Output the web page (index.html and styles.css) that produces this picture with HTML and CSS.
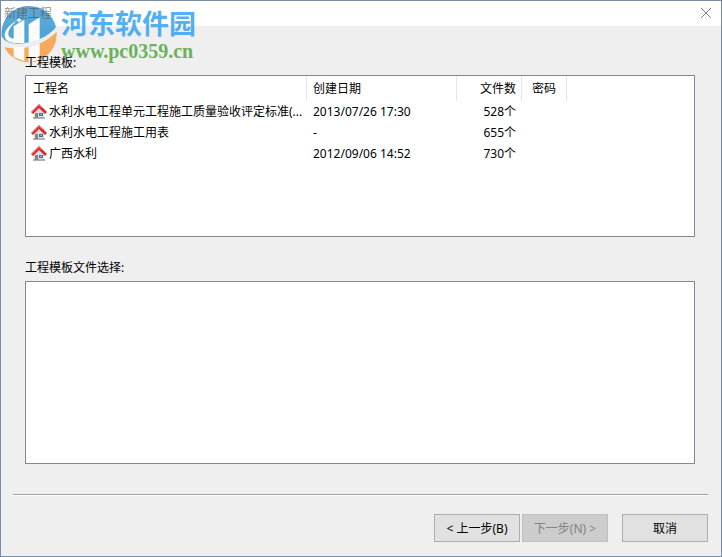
FILE: index.html
```
<!DOCTYPE html>
<html lang="zh-CN">
  <head>
    <meta charset="utf-8">
    <title>新建工程</title>
    <link rel="stylesheet" href="styles.css">
  </head>
  <body>
    <svg width="0" height="0" class="symbols" aria-hidden="true">
      <symbol id="house" viewBox="0 0 16 16">
        <path d="M3 8 L8 3 L13 8 V14 H3 Z" fill="#dedede" />
        <path d="M2 13 H14 V15 H2 Z" fill="#b0b0b0" />
        <rect x="4" y="9" width="3" height="5" fill="#8a8378" />
        <rect x="8" y="9" width="4" height="3" fill="#47719f" />
        <rect x="9" y="10" width="2" height="1" fill="#8fb4d8" />
        <path d="M0 8 L8 0 L16 8 L14 10 L8 4 L2 10 Z" fill="#dc2a2c" />
        <path d="M1 8 L8 1 L11 4" fill="none" stroke="#ee6a66" stroke-width="1" />
      </symbol>
    </svg>

    <div class="window">
      <header class="title-bar">
        <h1 class="title">新建工程</h1>
        <button class="close" type="button" aria-label="关闭">
          <svg width="12" height="12" viewBox="0 0 12 12">
            <path d="M1 1 L11 11 M11 1 L1 11" stroke="#808080" fill="none" />
          </svg>
        </button>
      </header>

      <div class="watermark">
        <svg class="watermark-logo" width="56" height="64" viewBox="0 0 168 192">
          <path d="M2 106 C-2 50 38 15 84 15 C126 15 156 42 165 78 C150 98 122 116 86 124 C50 132 14 130 2 106 Z" fill="#2d93d1" />
          <path d="M10 138 C66 152 132 130 167 92 C170 144 132 184 84 184 C52 184 22 166 10 138 Z" fill="#f79a3a" />
          <path d="M38 76 L70 56 V126 H38 Z" fill="#fff" />
          <path d="M83 70 L116 49 V116 L83 126 Z" fill="#fff" />
          <path d="M38 138 H70 V181 L38 168 Z" fill="#fff" />
          <path d="M83 138 L116 128 V176 L83 184 Z" fill="#fff" />
          <path d="M46 60 C24 72 10 88 11 106 C13 120 26 125 44 126 V114 C30 112 22 108 22 98 C22 84 34 72 46 60 Z" fill="#fff" />
          <path d="M48 78 H59 V126 H48 Z M94 76 H105 V118 H94 Z" fill="#fff" />
          <path d="M54 49 L57 55 L63 57 L57 60 L54 66 L51 60 L45 57 L51 55 Z" fill="#fff" />
        </svg>
        <div class="watermark-text">
          <div class="watermark-name">河东软件园</div>
          <div class="watermark-url">www.pc0359.cn</div>
        </div>
      </div>

      <main class="content">
        <h2 class="label">工程模板:</h2>
        <div class="list templates">
          <table>
            <colgroup>
              <col class="col-name">
              <col class="col-date">
              <col class="col-count">
              <col class="col-password">
              <col>
            </colgroup>
            <thead>
              <tr>
                <th>工程名</th>
                <th>创建日期</th>
                <th class="count">文件数</th>
                <th class="password">密码</th>
                <td></td>
              </tr>
            </thead>
            <tbody>
              <tr>
                <td class="name"><svg class="icon"><use href="#house" /></svg>水利水电工程单元工程施工质量验收评定标准(...</td>
                <td>2013/07/26 17:30</td>
                <td class="count">528个</td>
                <td></td>
                <td></td>
              </tr>
              <tr>
                <td class="name"><svg class="icon"><use href="#house" /></svg>水利水电工程施工用表</td>
                <td>-</td>
                <td class="count">655个</td>
                <td></td>
                <td></td>
              </tr>
              <tr>
                <td class="name"><svg class="icon"><use href="#house" /></svg>广西水利</td>
                <td>2012/09/06 14:52</td>
                <td class="count">730个</td>
                <td></td>
                <td></td>
              </tr>
            </tbody>
          </table>
        </div>

        <h2 class="label files-label">工程模板文件选择:</h2>
        <div class="list files"></div>
      </main>

      <footer class="footer">
        <button type="button">&lt; 上一步(B)</button>
        <button type="button" disabled>下一步(N) &gt;</button>
        <button type="button" class="cancel">取消</button>
      </footer>
    </div>
  </body>
</html>
```
FILE: styles.css
```
* {
  box-sizing: border-box;
}

body {
  margin: 0;
  font-family: "Noto Sans", "Noto Sans CJK SC", sans-serif;
  font-size: 12px;
  line-height: 18px;
  color: #000;
}

.symbols {
  position: absolute;
}

.window {
  position: relative;
  display: flex;
  flex-direction: column;
  min-height: 100vh;
  border: 1px solid #7b8ba6;
  background-color: #efefef;
}

.title-bar {
  display: flex;
  justify-content: space-between;
  align-items: center;
  height: 25px;
  padding: 0 9px 0 3px;
  background-color: #fff;
}

.title {
  position: relative;
  z-index: 2;
  margin: 0;
  font-size: 12px;
  font-weight: normal;
  color: rgba(90, 90, 90, 0.7);
}

.close {
  display: flex;
  padding: 0 0 2px;
  border: none;
  background: none;
}

/* site mark lies over the title bar and the first label */
.watermark {
  position: absolute;
  top: 0;
  left: 0;
  z-index: 1;
  display: flex;
  gap: 4px;
  opacity: 0.8;
  pointer-events: none;
}

.watermark-text {
  padding-top: 8px;
}

.watermark-name {
  font-size: 27px;
  font-weight: bold;
  line-height: 30px;
  color: #2a9df0;
}

.watermark-url {
  font-family: "Liberation Serif", serif;
  font-size: 20px;
  font-weight: bold;
  line-height: 24px;
  color: #4aa336;
}

.content {
  display: flex;
  flex-direction: column;
  flex-grow: 1;
  padding: 28px 26px 30px 24px;
}

.label {
  position: relative;
  z-index: 2;
  margin: 0 0 3px;
  font-size: 12px;
  font-weight: normal;
}

.files-label {
  margin: 22px 0 4px;
}

.list {
  border: 1px solid #828790;
  background-color: #fff;
}

.templates {
  min-height: 162px;
}

.files {
  flex-grow: 1;
  min-height: 120px;
}

table {
  width: 100%;
  table-layout: fixed;
  border-collapse: separate;
  border-spacing: 0;
}

.col-name {
  width: 281px;
}

.col-date {
  width: 150px;
}

.col-count {
  width: 65px;
}

.col-password {
  width: 45px;
}

th,
td {
  padding: 0 6px;
  text-align: left;
  font-weight: normal;
  white-space: nowrap;
}

th {
  height: 25px;
  border-right: 1px solid #e5e5e5;
}

th:first-child {
  padding-left: 7px;
}

tbody td {
  height: 21px;
}

.count {
  text-align: right;
}

th.count {
  padding-right: 5px;
}

.password {
  text-align: center;
}

td.name {
  padding: 0 0 0 5px;
}

.icon {
  width: 16px;
  height: 16px;
  margin-right: 2px;
  vertical-align: middle;
}

.footer {
  display: flex;
  justify-content: flex-end;
  gap: 2px;
  margin: 0 13px 0 12px;
  padding: 19px 0 14px;
  border-top: 1px solid #a0a0a0;
  box-shadow: inset 0 1px #fff;
}

.footer button {
  width: 86px;
  height: 28px;
  padding: 0;
  border: 1px solid #adadad;
  background-color: #e1e1e1;
  font-family: inherit;
  font-size: 12px;
  color: #000;
}

.footer button:disabled {
  border-color: #bfbfbf;
  background-color: #ccc;
  color: #838383;
}

.footer .cancel {
  margin-left: 12px;
}
```
